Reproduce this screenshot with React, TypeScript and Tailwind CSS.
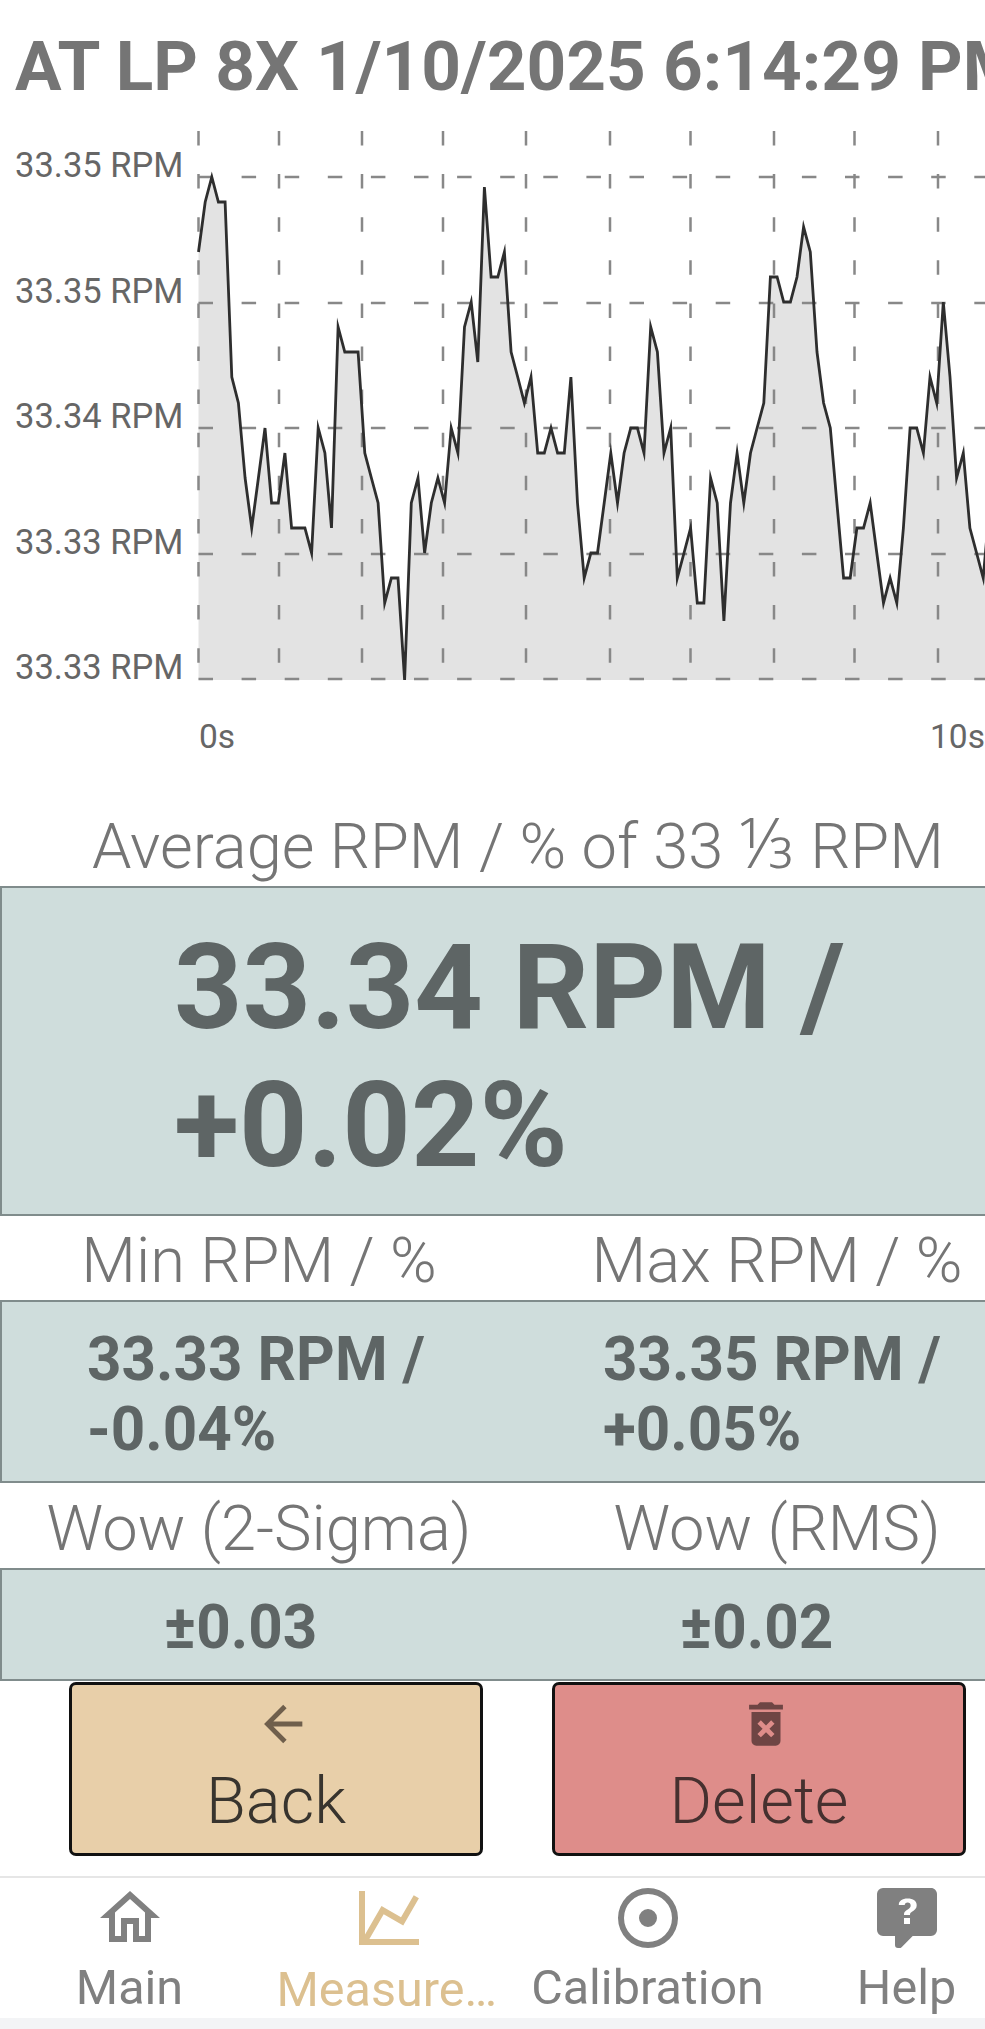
const rpmY = [
  252, 202, 177, 202, 202, 377, 403, 478, 528, 478, 428, 503, 503, 453, 528, 528, 528, 553, 428, 453,
  528, 327, 352, 352, 352, 453, 478, 503, 603, 578, 578, 680, 503, 478, 553, 503, 478, 503, 428, 453,
  327, 302, 362, 187, 277, 277, 252, 352, 377, 403, 377, 453, 453, 428, 453, 453, 377, 503, 578, 553,
  553, 503, 453, 503, 453, 428, 428, 453, 327, 352, 453, 428, 578, 553, 528, 603, 603, 478, 503, 621,
  503, 453, 503, 453, 428, 403, 277, 277, 302, 302, 277, 227, 252, 352, 403, 428, 503, 578, 578, 528,
  528, 503, 553, 603, 578, 603, 528, 428, 428, 453, 377, 403, 302, 377, 478, 453, 528, 553, 578, 503,
];

const gridX = [198.5, 279, 362, 443, 526, 610, 690.5, 774, 854.5, 938];
const gridY = [177, 303, 428, 554, 679];
const axisLabels = ["33.35 RPM", "33.35 RPM", "33.34 RPM", "33.33 RPM", "33.33 RPM"];

const linePoints = rpmY.map((y, i) => `${(198.5 + i * 6.65).toFixed(1)},${y}`).join(" ");
const fillPoints = `198.5,680 ${linePoints} ${(198.5 + 119 * 6.65).toFixed(1)},680`;

function RpmChart() {
  return (
    <svg width="1036" height="702" viewBox="0 108 1036 702" className="block">
      <polygon points={fillPoints} fill="#e3e3e3" />
      {gridY.map((y) => (
        <line key={y} x1="198.5" x2="1036" y1={y} y2={y} stroke="#888888" strokeWidth="2.5" strokeDasharray="14.5 28.6" />
      ))}
      {gridX.map((x) => (
        <line key={x} x1={x} x2={x} y1="131" y2="680" stroke="#888888" strokeWidth="2.5" strokeDasharray="14.5 28.6" />
      ))}
      <polyline points={linePoints} fill="none" stroke="#2e2e2e" strokeWidth="2.8" strokeMiterlimit="8" />
      {axisLabels.map((label, i) => (
        <text key={i} x="15" y={gridY[i]} fontSize="34.5" fill="#666666">
          {label}
        </text>
      ))}
      <text x="199" y="748" fontSize="33.5" fill="#666666">
        0s
      </text>
      <text x="930" y="748" fontSize="33.5" fill="#666666">
        10s
      </text>
    </svg>
  );
}

function Icon({ d, size, className }: { d: string; size: number; className: string }) {
  return (
    <svg width={size} height={size} viewBox="0 0 24 24" fill="currentColor" className={className}>
      <path d={d} />
    </svg>
  );
}

const tabs = [
  {
    label: "Main",
    d: "M12 5.69L17 10.19V18H15V12H9V18H7V10.19L12 5.69M12 3L2 12H5V20H11V14H13V20H19V12H22L12 3Z",
  },
  {
    label: "Measurements",
    active: true,
    d: "M16,11.78L20.24,4.45L21.97,5.45L16.74,14.5L10.23,10.75L5.46,19H22V21H2V3H4V17.54L9.5,8L16,11.78Z",
  },
  {
    label: "Calibration",
    d: "M12,20A8,8 0 0,1 4,12A8,8 0 0,1 12,4A8,8 0 0,1 20,12A8,8 0 0,1 12,20M12,2A10,10 0 0,0 2,12A10,10 0 0,0 12,22A10,10 0 0,0 22,12A10,10 0 0,0 12,2M12,9A3,3 0 0,0 9,12A3,3 0 0,0 12,15A3,3 0 0,0 15,12A3,3 0 0,0 12,9Z",
  },
  {
    label: "Help",
    d: "M4,2A2,2 0 0,0 2,4V16A2,2 0 0,0 4,18H8V21A1,1 0 0,0 9,22H9.5V22C9.75,22 10,21.9 10.2,21.71L13.9,18H20A2,2 0 0,0 22,16V4C22,2.89 21.1,2 20,2H4M12.19,5.5C13.13,5.5 13.88,5.71 14.42,6.12C14.96,6.54 15.23,7.1 15.23,7.8C15.23,8.24 15.08,8.63 14.79,9C14.5,9.36 14.12,9.66 13.66,9.88C13.4,10.04 13.23,10.2 13.14,10.36C13.05,10.53 13,10.74 13,11H11C11,10.5 11.1,10.16 11.29,9.92C11.5,9.68 11.84,9.4 12.36,9.08C12.62,8.94 12.83,8.76 13,8.54C13.14,8.33 13.22,8.08 13.22,7.8C13.22,7.5 13.13,7.28 12.95,7.11C12.77,6.93 12.5,6.85 12.19,6.85C11.92,6.85 11.7,6.92 11.5,7.06C11.34,7.2 11.24,7.41 11.24,7.69H9.27C9.22,7 9.5,6.45 10.05,6.07C10.59,5.69 11.3,5.5 12.19,5.5M11,12H13V14H11V12Z",
  },
];

export default function App() {
  return (
    <div className="w-[985px] h-[2029px] overflow-hidden bg-white font-[Roboto,sans-serif]">
      <div className="w-[1036px]">
        <h1 className="pt-[26px] pl-[15px] text-[69.3px] leading-[82px] font-bold text-[#757575] whitespace-nowrap">
          AT LP 8X 1/10/2025 6:14:29 PM
        </h1>

        <RpmChart />

        {/* Average */}
        <div className="h-[76px] text-center text-[63.2px] leading-[73px] font-light text-[#757575]">
          Average RPM / % of 33 <span className="font-['Noto_Sans'] text-[70px] leading-[0px] font-light">⅓</span> RPM
        </div>
        <div className="h-[330px] pt-[30px] pl-[172px] border-2 border-[#808c8c] bg-[#cfdddc] text-[119.5px] leading-[138px] font-bold text-[#5e6565]">
          33.34 RPM /
          <br />
          +0.02%
        </div>

        {/* Min / Max */}
        <div className="grid grid-cols-2 h-[84px] pt-[8px] text-center text-[63.2px] leading-[73px] font-light text-[#757575]">
          <div>Min RPM / %</div>
          <div>Max RPM / %</div>
        </div>
        <div className="grid grid-cols-2 h-[183px] pt-[23px] border-2 border-[#808c8c] bg-[#cfdddc] text-[60.2px] leading-[70px] font-bold text-[#5e6565]">
          <div className="pl-[85px]">
            33.33 RPM /
            <br />
            -0.04%
          </div>
          <div className="pl-[85px]">
            33.35 RPM /
            <br />
            +0.05%
          </div>
        </div>

        {/* Wow */}
        <div className="grid grid-cols-2 h-[85px] pt-[9px] text-center text-[63.2px] leading-[73px] font-light text-[#757575]">
          <div>Wow (2-Sigma)</div>
          <div>Wow (RMS)</div>
        </div>
        <div className="grid grid-cols-2 h-[113px] pt-[23px] border-2 border-[#808c8c] bg-[#cfdddc] text-[60.2px] leading-[70px] font-bold text-[#5e6565]">
          <div className="pl-[162px]">±0.03</div>
          <div className="pl-[162px]">±0.02</div>
        </div>

        {/* Buttons */}
        <div className="flex gap-[69px] h-[195px] pt-[1px] pl-[69px]">
          <button className="flex flex-col items-center w-[414px] h-[174px] pt-[10px] border-[3px] border-[#111111] rounded-[7px] bg-[#e8cfa9] text-[65px] leading-[75px] font-light text-[#38342e]">
            <Icon
              size={58}
              className="ml-[14px] mb-[11px] text-[#6f5f4c]"
              d="M20,11V13H8L13.5,18.5L12.08,19.92L4.16,12L12.08,4.08L13.5,5.5L8,11H20Z"
            />
            Back
          </button>
          <button className="flex flex-col items-center w-[414px] h-[174px] pt-[10px] border-[3px] border-[#111111] rounded-[7px] bg-[#de8d8a] text-[65px] leading-[75px] font-light text-[#46302f]">
            <Icon
              size={58}
              className="ml-[14px] mb-[11px] text-[#6e4544]"
              d="M6,19A2,2 0 0,0 8,21H16A2,2 0 0,0 18,19V7H6V19M8.46,11.88L9.87,10.47L12,12.59L14.12,10.47L15.53,11.88L13.41,14L15.53,16.12L14.12,17.53L12,15.41L9.87,17.53L8.46,16.12L10.59,14L8.46,11.88M15.5,4L14.5,3H9.5L8.5,4H5V6H19V4H15.5Z"
            />
            Delete
          </button>
        </div>

        {/* Bottom tabs */}
        <div className="grid grid-cols-4 h-[142px] pt-[4px] border-t-2 border-[#e6e6e6] text-[48.5px] leading-[54px] text-[#808080]">
          {tabs.map((tab) => (
            <div key={tab.label} className={`flex flex-col items-center ${tab.active ? "text-[#dcc090]" : ""}`}>
              <Icon size={72} d={tab.d} className="mb-[7px]" />
              <span className={tab.active ? "max-w-[224px] truncate pt-[2px]" : ""}>{tab.label}</span>
            </div>
          ))}
        </div>
        <div className="h-[11px] bg-[#f3f4f6]" />
      </div>
    </div>
  );
}
